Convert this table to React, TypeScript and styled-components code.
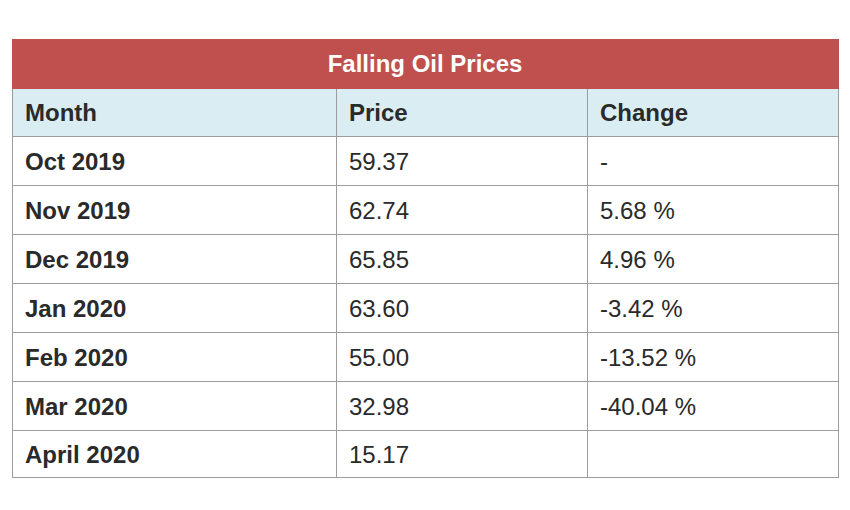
import React from "react";
import styled, { createGlobalStyle } from "styled-components";

const GlobalStyle = createGlobalStyle`
  html, body {
    margin: 0;
    padding: 0;
    background: #ffffff;
  }
  body {
    font-family: "Liberation Sans", Arial, sans-serif;
  }
`;

const Page = styled.div`
  width: 850px;
  height: 510px;
  box-sizing: border-box;
  padding: 39px 0 0 12px;
  background: #ffffff;
`;

const Table = styled.div`
  width: 827px;
  display: flex;
  flex-direction: column;
`;

const TitleBar = styled.div`
  height: 50px;
  background: #c0504d;
  color: #ffffff;
  font-weight: 700;
  font-size: 24px;
  display: flex;
  align-items: center;
  justify-content: center;
  padding-right: 1px;
`;

const Grid = styled.div`
  display: grid;
  grid-template-columns: 325px 251px 251px;
`;

const Cell = styled.div<{ $header?: boolean; $first?: boolean; $bold?: boolean; $h: number }>`
  box-sizing: border-box;
  height: ${(p) => p.$h}px;
  display: flex;
  align-items: center;
  padding-left: 12px;
  padding-top: 1px;
  border-right: 1px solid #9c9c9c;
  border-bottom: 1px solid #9c9c9c;
  border-left: ${(p) => (p.$first ? "1px solid #9c9c9c" : "none")};
  background: ${(p) => (p.$header ? "#daedf2" : "#ffffff")};
  color: #2a2a2a;
  font-size: 24px;
  font-weight: ${(p) => (p.$bold ? 700 : 400)};
  white-space: nowrap;
`;

const rows: [string, string, string][] = [
  ["Oct 2019", "59.37", "-"],
  ["Nov 2019", "62.74", "5.68 %"],
  ["Dec 2019", "65.85", "4.96 %"],
  ["Jan 2020", "63.60", "-3.42 %"],
  ["Feb 2020", "55.00", "-13.52 %"],
  ["Mar 2020", "32.98", "-40.04 %"],
  ["April 2020", "15.17", ""],
];

const heights = [49, 49, 49, 49, 49, 49, 47];

export default function App() {
  return (
    <>
      <GlobalStyle />
      <Page>
        <Table>
          <TitleBar>Falling Oil Prices</TitleBar>
          <Grid>
            <Cell $header $first $bold $h={48}>Month</Cell>
            <Cell $header $bold $h={48}>Price</Cell>
            <Cell $header $bold $h={48}>Change</Cell>
            {rows.map((r, i) => (
              <React.Fragment key={r[0]}>
                <Cell $first $bold $h={heights[i]}>{r[0]}</Cell>
                <Cell $h={heights[i]}>{r[1]}</Cell>
                <Cell $h={heights[i]}>{r[2]}</Cell>
              </React.Fragment>
            ))}
          </Grid>
        </Table>
      </Page>
    </>
  );
}
